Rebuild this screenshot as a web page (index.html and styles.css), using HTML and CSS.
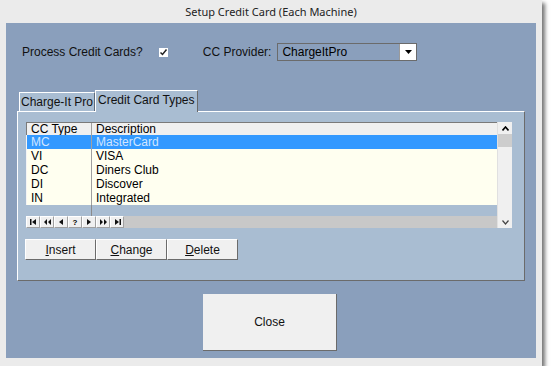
FILE: index.html
```html
<!DOCTYPE html>
<html>
<head>
  <link rel="stylesheet" href="styles.css">
</head>
<body>

<div class="window">
  <div class="title">Setup Credit Card (Each Machine)</div>
  <div class="client">

    <div class="top-row">
      <span class="label">Process Credit Cards?</span>
      <span class="check">
        <svg width="9" height="9" viewBox="0 0 9 9"><path d="M1.5 4.5 L3.5 6.5 L7.5 1.5" fill="none" stroke="#222" stroke-width="1.5"/></svg>
      </span>
      <span class="label provider-label">CC Provider:</span>
      <div class="combo">
        <span class="combo-text">ChargeItPro</span>
        <span class="combo-btn">
          <svg width="7" height="4" viewBox="0 0 7 4"><path d="M0 0 L7 0 L3.5 4 Z" fill="#000"/></svg>
        </span>
      </div>
    </div>

    <div class="tabs">
      <div class="tab">Charge-It Pro</div>
      <div class="tab active">Credit Card Types</div>
    </div>

    <div class="panel">
      <div class="grid">
        <div class="grid-main">
          <div class="grid-row header">
            <div class="c1">CC Type</div>
            <div class="c2">Description</div>
          </div>
          <div class="grid-row selected">
            <div class="c1">MC</div>
            <div class="c2">MasterCard</div>
          </div>
          <div class="grid-row">
            <div class="c1">VI</div>
            <div class="c2">VISA</div>
          </div>
          <div class="grid-row">
            <div class="c1">DC</div>
            <div class="c2">Diners Club</div>
          </div>
          <div class="grid-row">
            <div class="c1">DI</div>
            <div class="c2">Discover</div>
          </div>
          <div class="grid-row">
            <div class="c1">IN</div>
            <div class="c2">Integrated</div>
          </div>
          <div class="grid-empty"><div class="c1"></div></div>
          <div class="nav-bar">
            <span class="nav-btn"><svg width="7" height="6" viewBox="0 0 7 6"><rect x="0" y="0" width="1.5" height="6"/><path d="M6 0 L2 3 L6 6 Z"/></svg></span>
            <span class="nav-btn"><svg width="7" height="6" viewBox="0 0 7 6"><path d="M3 0 L0 3 L3 6 Z M7 0 L4 3 L7 6 Z"/></svg></span>
            <span class="nav-btn"><svg width="4" height="6" viewBox="0 0 4 6"><path d="M4 0 L0 3 L4 6 Z"/></svg></span>
            <span class="nav-btn q">?</span>
            <span class="nav-btn"><svg width="4" height="6" viewBox="0 0 4 6"><path d="M0 0 L4 3 L0 6 Z"/></svg></span>
            <span class="nav-btn"><svg width="7" height="6" viewBox="0 0 7 6"><path d="M0 0 L3 3 L0 6 Z M4 0 L7 3 L4 6 Z"/></svg></span>
            <span class="nav-btn"><svg width="7" height="6" viewBox="0 0 7 6"><path d="M1 0 L5 3 L1 6 Z"/><rect x="5.5" y="0" width="1.5" height="6"/></svg></span>
          </div>
        </div>
        <div class="scrollbar">
          <span class="arrow"><svg width="7" height="5" viewBox="0 0 7 5"><path d="M0.5 4.5 L3.5 1 L6.5 4.5" fill="none" stroke="#000" stroke-width="1.6"/></svg></span>
          <span class="thumb"></span>
          <span class="track"></span>
          <span class="arrow"><svg width="7" height="5" viewBox="0 0 7 5"><path d="M0.5 0.5 L3.5 4 L6.5 0.5" fill="none" stroke="#444" stroke-width="1.2"/></svg></span>
        </div>
      </div>

      <div class="buttons">
        <button class="btn"><u>I</u>nsert</button>
        <button class="btn"><u>C</u>hange</button>
        <button class="btn"><u>D</u>elete</button>
      </div>
    </div>

    <div class="footer">
      <button class="close-btn">Close</button>
    </div>

  </div>
</div>

</body>
</html>
```

FILE: styles.css
```css
body {
  margin: 0;
  padding: 0;
  background-color: #fff;
  font-family: "Liberation Sans", Arial, sans-serif;
  font-size: 12px;
  color: #000;
}

.window {
  width: 530px;
  height: 358px;
  margin: 0;
  padding: 0 6px 8px 6px;
  background-color: #ebebeb;
  box-shadow: 3px 3px 4px rgba(0, 0, 0, 0.55);
}

.title {
  height: 23px;
  line-height: 24px;
  text-align: center;
  font-family: "Noto Sans", "Open Sans", sans-serif;
  font-size: 11px;
  color: #222;
}

.client {
  height: 335px;
  background-color: #8a9fbc;
  display: flex;
  flex-direction: column;
}

.top-row {
  display: flex;
  align-items: center;
  height: 18px;
  margin-top: 20px;
  padding-left: 16px;
}

.label {
  font-size: 12px;
  color: #111;
}

.check {
  display: flex;
  align-items: center;
  justify-content: center;
  width: 9px;
  height: 9px;
  margin-left: 16px;
  background-color: #fff;
}

.provider-label {
  margin-left: 35px;
}

.combo {
  display: flex;
  align-items: stretch;
  width: 138px;
  height: 16px;
  margin-left: 6px;
  border: 1px solid #6b6b6b;
  background-color: #8a9fbc;
}

.combo-text {
  flex: 1;
  padding-left: 4px;
  line-height: 16px;
  font-size: 12px;
}

.combo-btn {
  display: flex;
  align-items: center;
  justify-content: center;
  width: 16px;
  background-color: #fff;
  border-left: 1px solid #9a9a9a;
}

.tabs {
  display: flex;
  align-items: flex-end;
  margin-top: 29px;
  padding-left: 13px;
  height: 21px;
  position: relative;
  z-index: 1;
}

.tab {
  height: 18px;
  line-height: 19px;
  padding: 0 1px;
  background-color: #a9bdd2;
  border-top: 1px solid #fff;
  border-left: 1px solid #fff;
  border-right: 1px solid #5d6b7c;
  font-size: 12px;
  color: #111;
}

.tab.active {
  height: 21px;
  line-height: 19px;
  padding: 0 2px;
  margin-bottom: -1px;
  border-right-color: #6b6b6b;
}

.panel {
  margin-left: 11px;
  width: 506px;
  height: 158px;
  background-color: #a9bdd2;
  border-top: 1px solid #fff;
  border-left: 1px solid #fff;
  border-right: 1px solid #6b6b6b;
  border-bottom: 1px solid #6b6b6b;
  padding-top: 10px;
}

.grid {
  display: flex;
  margin-left: 8px;
  width: 486px;
  height: 106px;
}

.grid-main {
  flex: 1;
  display: flex;
  flex-direction: column;
  font-size: 12px;
}

.grid-row {
  display: flex;
  height: 14px;
  line-height: 14px;
  background-color: #fffff0;
  border-left: 1px solid #f4f4f4;
}

.grid-row.header {
  height: 12px;
  line-height: 12px;
  background-color: #f0f0f0;
  border-top: 1px solid #7a7a7a;
  border-left: 1px solid #7a7a7a;
}

.grid-row.selected {
  background-color: #3399ff;
  color: #d2e6ff;
}

.c1 {
  width: 65px;
  padding-left: 4px;
  box-sizing: border-box;
  border-right: 1px solid #a0a0a0;
}

.c2 {
  flex: 1;
  padding-left: 4px;
}

.grid-empty {
  flex: 1;
  display: flex;
  padding-left: 1px;
}

.grid-empty .c1 {
  border-right-color: #8b8b8b;
}

.nav-bar {
  display: flex;
  height: 12px;
  background-color: #c8c8c8;
}

.nav-btn {
  display: flex;
  align-items: center;
  justify-content: center;
  width: 12px;
  height: 10px;
  background-color: #f0f0f0;
  border-top: 1px solid #fff;
  border-left: 1px solid #fff;
  border-right: 1px solid #a0a0a0;
  border-bottom: 1px solid #a0a0a0;
  font-size: 8px;
  font-weight: bold;
}

.nav-btn svg {
  fill: #111;
}

.scrollbar {
  display: flex;
  flex-direction: column;
  width: 14px;
  background-color: #f0f0f0;
  border-left: 1px solid #e0e0e0;
}

.arrow {
  display: flex;
  align-items: center;
  justify-content: center;
  height: 12px;
}

.thumb {
  height: 13px;
  background-color: #cdcdcd;
}

.track {
  flex: 1;
}

.buttons {
  display: flex;
  margin-top: 11px;
  margin-left: 7px;
}

.btn {
  width: 71px;
  height: 21px;
  margin: 0;
  padding: 0;
  background-color: #f0f0f0;
  border-top: 1px solid #fff;
  border-left: 1px solid #fff;
  border-right: 1px solid #6b6b6b;
  border-bottom: 1px solid #6b6b6b;
  font-family: "Liberation Sans", Arial, sans-serif;
  font-size: 12px;
  color: #111;
}

.footer {
  display: flex;
  padding-left: 197px;
  margin-top: 13px;
}

.close-btn {
  width: 134px;
  height: 57px;
  background-color: #f0f0f0;
  border: none;
  border-right: 1px solid #6b6b6b;
  border-bottom: 1px solid #6b6b6b;
  font-family: "Liberation Sans", Arial, sans-serif;
  font-size: 12px;
  color: #111;
}
```
